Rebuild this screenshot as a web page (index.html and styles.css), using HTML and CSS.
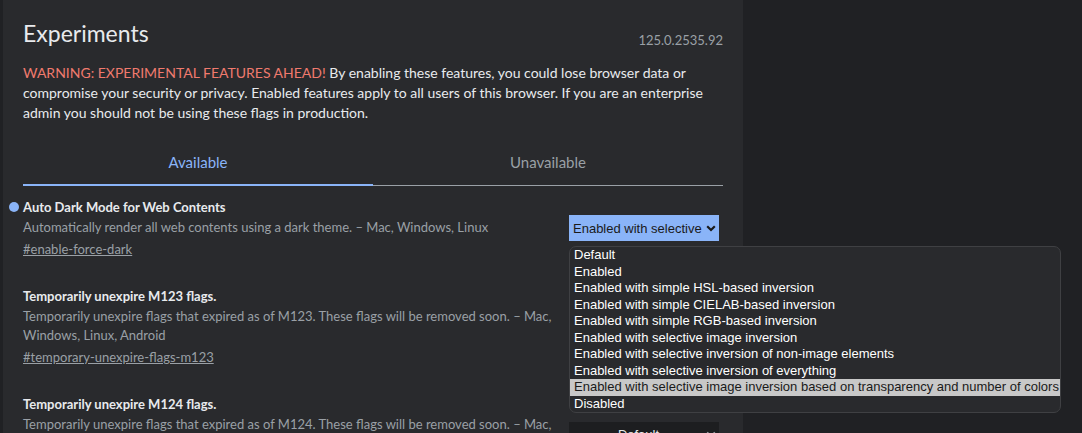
FILE: index.html
```html
<!DOCTYPE html>
<html lang="en">
<head>
<meta charset="utf-8">
<title>Experiments</title>
<link rel="stylesheet" href="styles.css">
</head>
<body>
<div class="page">
  <main class="panel">
    <header class="head">
      <h1 class="title">Experiments</h1>
      <span class="version">125.0.2535.92</span>
    </header>
    <p class="warning"><span class="warn">WARNING: EXPERIMENTAL FEATURES AHEAD!</span> By enabling these features, you could lose browser data or<br>compromise your security or privacy. Enabled features apply to all users of this browser. If you are an enterprise<br>admin you should not be using these flags in production.</p>
    <nav class="tabs">
      <div class="tab active">Available</div>
      <div class="tab">Unavailable</div>
    </nav>
    <section class="flags">
      <div class="flag modified">
        <span class="dot"></span>
        <div class="info">
          <h3 class="flag-name">Auto Dark Mode for Web Contents</h3>
          <p class="desc">Automatically render all web contents using a dark theme. – Mac, Windows, Linux</p>
          <a class="perma">#enable-force-dark</a>
        </div>
        <div class="control">
          <div class="select select-on">
            <span class="sel-text">Enabled with selective</span>
            <svg class="chev" width="10" height="7" viewBox="0 0 10 7"><path d="M1.2 1.2 L5 5 L8.8 1.2" fill="none" stroke="#1a1a1a" stroke-width="2.2"/></svg>
          </div>
          <ul class="popup">
            <li class="opt">Default</li>
            <li class="opt">Enabled</li>
            <li class="opt">Enabled with simple HSL-based inversion</li>
            <li class="opt">Enabled with simple CIELAB-based inversion</li>
            <li class="opt">Enabled with simple RGB-based inversion</li>
            <li class="opt">Enabled with selective image inversion</li>
            <li class="opt">Enabled with selective inversion of non-image elements</li>
            <li class="opt">Enabled with selective inversion of everything</li>
            <li class="opt hl">Enabled with selective image inversion based on transparency and number of colors</li>
            <li class="opt">Disabled</li>
          </ul>
        </div>
      </div>
      <div class="flag">
        <div class="info">
          <h3 class="flag-name">Temporarily unexpire M123 flags.</h3>
          <p class="desc">Temporarily unexpire flags that expired as of M123. These flags will be removed soon. – Mac,<br>Windows, Linux, Android</p>
          <a class="perma">#temporary-unexpire-flags-m123</a>
        </div>
        <div class="control">
          <div class="select covered">
            <span class="sel-text center">Default</span>
            <svg class="chev" width="10" height="7" viewBox="0 0 10 7"><path d="M1.2 1.2 L5 5 L8.8 1.2" fill="none" stroke="#9aa0a6" stroke-width="1.5"/></svg>
          </div>
        </div>
      </div>
      <div class="flag">
        <div class="info">
          <h3 class="flag-name">Temporarily unexpire M124 flags.</h3>
          <p class="desc">Temporarily unexpire flags that expired as of M124. These flags will be removed soon. – Mac,<br>Windows, Linux, Android</p>
          <a class="perma">#temporary-unexpire-flags-m124</a>
        </div>
        <div class="control">
          <div class="select">
            <span class="sel-text center">Default</span>
            <svg class="chev" width="10" height="7" viewBox="0 0 10 7"><path d="M1.2 1.2 L5 5 L8.8 1.2" fill="none" stroke="#9aa0a6" stroke-width="1.5"/></svg>
          </div>
        </div>
      </div>
    </section>
  </main>
</div>
</body>
</html>
```
FILE: styles.css
```css
* { box-sizing: border-box; }
html, body { margin: 0; padding: 0; height: 100%; overflow: hidden; }
body {
  background: #202124;
  font-family: "Lato", "Noto Sans", sans-serif;
  color: #e8eaed;
}
.page { padding-left: 3px; height: 100%; }
.panel {
  width: 740px;
  height: 100%;
  background: #292a2d;
  padding: 0 20px;
}
.head {
  display: flex;
  justify-content: space-between;
  align-items: flex-start;
  padding-top: 18px;
  height: 48px;
}
.title {
  margin: 0;
  font-size: 23px;
  font-weight: 400;
  line-height: 30px;
  color: #e8eaed;
}
.version {
  margin-top: 12px;
  font-size: 13px;
  line-height: 20px;
  color: #9aa0a6;
}
.warning {
  margin: 15px 0 0;
  font-size: 14px;
  line-height: 20px;
  color: #e8eaed;
}
.warn { color: #f07a6e; }
.tabs {
  display: flex;
  margin-top: 14px;
  border-bottom: 1px solid #9aa0a6;
}
.tab {
  flex: 1;
  text-align: center;
  font-size: 15px;
  line-height: 20px;
  padding: 15px 0 13px;
  color: #9aa0a6;
}
.tab.active {
  color: #8ab4f8;
  padding-bottom: 12px;
  border-bottom: 2px solid #8ab4f8;
  margin-bottom: -1px;
}
.flags { padding-top: 11px; }
.flag {
  position: relative;
  display: flex;
  align-items: center;
  justify-content: space-between;
  margin-bottom: 27px;
}
.dot {
  position: absolute;
  left: -14px;
  top: 5px;
  width: 10px;
  height: 10px;
  border-radius: 50%;
  background: #8ab4f8;
}
.info { flex: 1; min-width: 0; }
.flag-name {
  margin: 0;
  font-size: 13px;
  font-weight: 700;
  line-height: 20px;
  color: #e8eaed;
}
.desc {
  margin: 1px 0 0;
  font-size: 13px;
  line-height: 19px;
  color: #9aa0a6;
}
.perma {
  display: inline-block;
  margin-top: 2px;
  font-size: 13px;
  line-height: 20px;
  color: #9aa0a6;
  text-decoration: underline;
}
.control {
  position: relative;
  width: 150px;
  margin-right: 4px;
  flex: none;
}
.select {
  height: 26px;
  display: flex;
  align-items: center;
  padding: 0 3px 0 4px;
  background: #1d1e20;
  font-family: "Liberation Sans", Arial, sans-serif;
  font-size: 13px;
  color: #e8eaed;
}
.select.covered { visibility: hidden; }
.select-on { background: #8ab4f8; color: #1a1a1a; }
.sel-text { flex: 1; white-space: nowrap; overflow: hidden; }
.sel-text.center { text-align: center; }
.chev { flex: none; margin-left: 2px; }
.popup {
  position: absolute;
  left: 0;
  top: 31px;
  z-index: 5;
  width: 492px;
  margin: 0;
  padding: 0;
  list-style: none;
  background: #292a2d;
  border: 1px solid #3f4043;
  border-radius: 7px;
  overflow: hidden;
}
.opt {
  height: 16.5px;
  line-height: 16px;
  padding-left: 4px;
  font-family: "Liberation Sans", Arial, sans-serif;
  font-size: 13px;
  color: #ffffff;
  white-space: nowrap;
}
.opt.hl { background: #c8c8c8; color: #1a1a1a; }
```
